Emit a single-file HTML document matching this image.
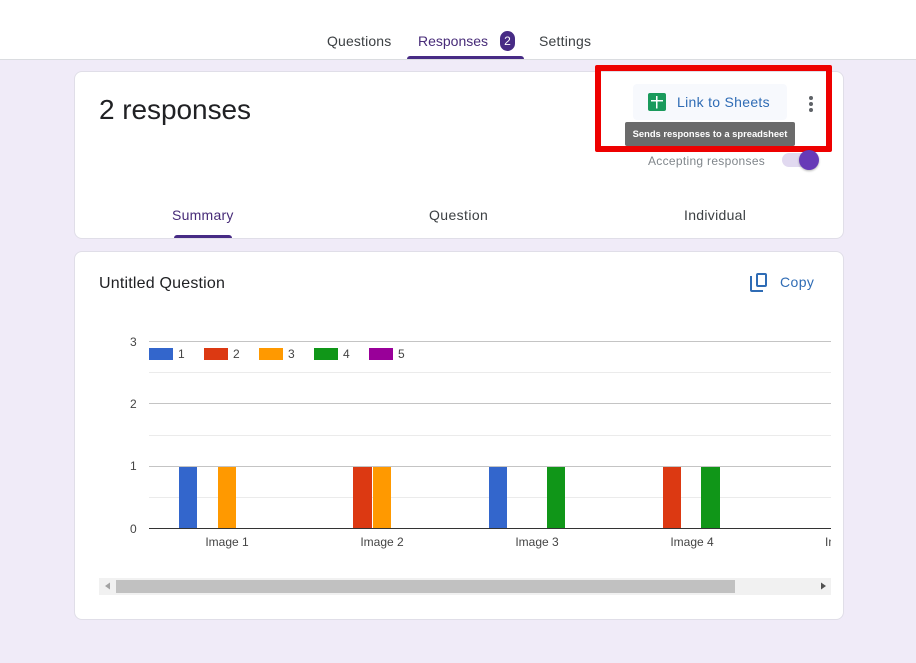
<!DOCTYPE html>
<html>
<head>
<meta charset="utf-8">
<style>
html,body{margin:0;padding:0;}
body{width:916px;height:663px;background:#f0ebf8;position:relative;overflow:hidden;font-family:"Liberation Sans",sans-serif;}
.a{position:absolute;white-space:nowrap;line-height:1;}
.card{position:absolute;background:#fff;border:1px solid #e0dee8;border-radius:8px;box-sizing:border-box;}
</style>
</head>
<body>
<div class="a" style="left:0;top:0;width:916px;height:60px;background:#fff;border-bottom:1px solid #dadce0;box-sizing:border-box;"></div>
<div class="a" style="left:327px;top:34px;font-size:14px;color:#3c4043;letter-spacing:.15px;">Questions</div>
<div class="a" style="left:418px;top:34px;font-size:14px;color:#472b78;">Responses</div>
<div class="a" style="left:500px;top:31px;width:15px;height:20px;border-radius:8px;background:#472b85;color:#fff;font-size:12px;line-height:20px;text-align:center;">2</div>
<div class="a" style="left:539px;top:34px;font-size:14px;color:#3c4043;letter-spacing:.2px;">Settings</div>
<div class="a" style="left:407px;top:56px;width:117px;height:3px;background:#472b85;border-radius:3px 3px 0 0;"></div>

<div class="card" style="left:74px;top:71px;width:770px;height:168px;"></div>
<div class="a" style="left:99px;top:96px;font-size:28px;color:#202124;letter-spacing:-.05px;">2 responses</div>

<div class="a" style="left:633px;top:84px;width:154px;height:36px;background:#f7f9fd;border-radius:4px;"></div>
<svg class="a" style="left:648px;top:93px;" width="18" height="18" viewBox="0 0 18 18"><rect width="18" height="18" rx="2" fill="#1a9a5c"/><path d="M3 7h12v1.500H3zM8 3h1.500v12.500H8z" fill="#fff"/></svg>
<div class="a" style="left:677px;top:95px;font-size:14px;color:#2f6cb5;letter-spacing:.3px;">Link to Sheets</div>
<svg class="a" style="left:806px;top:95px;" width="10" height="18" viewBox="0 0 10 18"><circle cx="5" cy="3" r="2" fill="#5f6368"/><circle cx="5" cy="9" r="2" fill="#5f6368"/><circle cx="5" cy="15" r="2" fill="#5f6368"/></svg>

<div class="a" style="left:595px;top:65px;width:237px;height:87px;border:6px solid #ee0000;box-sizing:border-box;border-radius:2px;"></div>
<div class="a" style="left:625px;top:122px;width:170px;height:24px;background:#6b6b6b;border-radius:2px;color:#fff;font-size:9.4px;font-weight:bold;line-height:24px;text-align:center;">Sends responses to a spreadsheet</div>

<div class="a" style="left:648px;top:155px;font-size:12px;color:#80868b;letter-spacing:.3px;">Accepting responses</div>
<div class="a" style="left:782px;top:153px;width:34px;height:14px;border-radius:7px;background:#e1d9f0;"></div>
<div class="a" style="left:799px;top:150px;width:20px;height:20px;border-radius:50%;background:#673ab7;box-shadow:0 1px 2px rgba(0,0,0,.3);"></div>

<div class="a" style="left:172px;top:208px;font-size:14px;color:#472b78;letter-spacing:.25px;">Summary</div>
<div class="a" style="left:174px;top:235px;width:58px;height:3px;background:#472b85;border-radius:3px 3px 0 0;"></div>
<div class="a" style="left:429px;top:208px;font-size:14px;color:#3c4043;letter-spacing:.4px;">Question</div>
<div class="a" style="left:684px;top:208px;font-size:14px;color:#3c4043;letter-spacing:.3px;">Individual</div>

<div class="card" style="left:74px;top:251px;width:770px;height:369px;"></div>
<div class="a" style="left:99px;top:276px;font-size:16px;color:#202124;letter-spacing:.2px;">Untitled Question</div>
<svg class="a" style="left:748px;top:271px;" width="22" height="22" viewBox="0 0 22 22" fill="none" stroke="#2f6cb5" stroke-width="2"><rect x="9" y="3" width="9" height="12" rx="1"/><path d="M3 5v14a1 1 0 0 0 1 1h11"/></svg>
<div class="a" style="left:780px;top:275px;font-size:14px;color:#2f6cb5;letter-spacing:.4px;">Copy</div>

<svg class="a" style="left:0;top:0;" width="916" height="663" font-family="Liberation Sans, sans-serif">
<defs><clipPath id="c"><rect x="99" y="320" width="732" height="240"/></clipPath></defs>
<g fill="#ebebeb"><rect x="149" y="372" width="682" height="1"/><rect x="149" y="435" width="682" height="1"/><rect x="149" y="497" width="682" height="1"/></g>
<g fill="#c4c4c4"><rect x="149" y="341" width="682" height="1"/><rect x="149" y="403" width="682" height="1"/><rect x="149" y="466" width="682" height="1"/></g>
<g font-size="12" fill="#444">
<text x="130" y="346">3</text><text x="130" y="408">2</text><text x="130" y="470">1</text><text x="130" y="533">0</text>
</g>
<g>
<rect x="149" y="348" width="24" height="12" fill="#3366cc"/>
<rect x="204" y="348" width="24" height="12" fill="#dc3912"/>
<rect x="259" y="348" width="24" height="12" fill="#ff9900"/>
<rect x="314" y="348" width="24" height="12" fill="#109618"/>
<rect x="369" y="348" width="24" height="12" fill="#990099"/>
</g>
<g font-size="12" fill="#444">
<text x="178" y="358">1</text><text x="233" y="358">2</text><text x="288" y="358">3</text><text x="343" y="358">4</text><text x="398" y="358">5</text>
</g>
<rect x="179" y="467" width="18" height="62" fill="#3366cc"/>
<rect x="218" y="467" width="18" height="62" fill="#ff9900"/>
<rect x="353" y="467" width="19" height="62" fill="#dc3912"/>
<rect x="373" y="467" width="18" height="62" fill="#ff9900"/>
<rect x="489" y="467" width="18" height="62" fill="#3366cc"/>
<rect x="547" y="467" width="18" height="62" fill="#109618"/>
<rect x="663" y="467" width="18" height="62" fill="#dc3912"/>
<rect x="701" y="467" width="19" height="62" fill="#109618"/>
<rect x="149" y="528" width="682" height="1" fill="#333"/>
<g font-size="12" fill="#444" text-anchor="middle">
<text x="227" y="546">Image 1</text><text x="382" y="546">Image 2</text><text x="537" y="546">Image 3</text><text x="692" y="546">Image 4</text>
</g>
<text x="825" y="546" font-size="12" fill="#444" clip-path="url(#c)">Image 5</text>
<rect x="99" y="578" width="732" height="17" fill="#f1f1f1"/>
<rect x="116" y="580" width="619" height="13" fill="#c1c1c1"/>
<path d="M110 582.500v7l-5-3.500z" fill="#a3a3a3"/>
<path d="M821 582.500v7l5-3.500z" fill="#505050"/>
</svg>
</body>
</html>
